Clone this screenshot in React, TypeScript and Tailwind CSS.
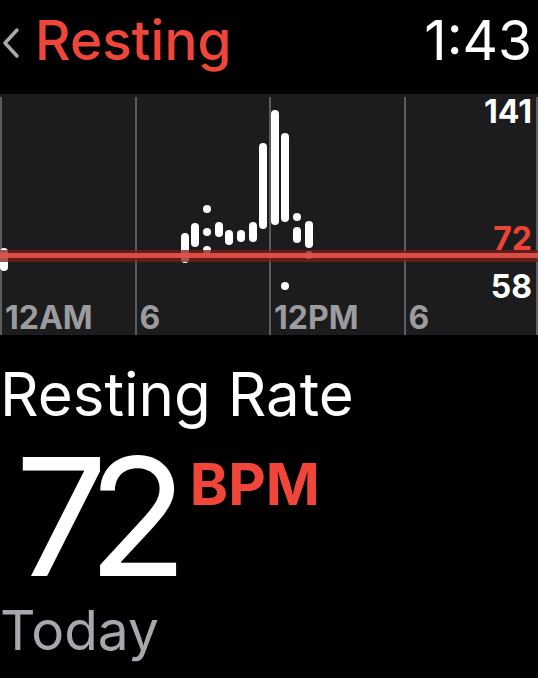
import React from "react";

const bars: { x: number; y1: number; y2: number }[] = [
  { x: 4, y1: 154, y2: 177 },
  { x: 185, y1: 139, y2: 169 },
  { x: 195, y1: 129, y2: 153 },
  { x: 219, y1: 128, y2: 143 },
  { x: 229, y1: 136, y2: 151 },
  { x: 241, y1: 136, y2: 148 },
  { x: 253, y1: 128, y2: 148 },
  { x: 263, y1: 49, y2: 135 },
  { x: 275, y1: 16, y2: 131 },
  { x: 285, y1: 39, y2: 128 },
  { x: 297, y1: 133, y2: 149 },
  { x: 309, y1: 127, y2: 154 },
];

const dots: { x: number; y: number }[] = [
  { x: 207, y: 115 },
  { x: 207, y: 138 },
  { x: 207, y: 156 },
  { x: 297, y: 123 },
  { x: 309, y: 161 },
  { x: 285, y: 192 },
];

const gridX = [1, 136, 270, 405, 537];
const hours = ["12AM", "6", "12PM", "6"];

function Chart() {
  return (
    <div className="relative flex h-[241px] flex-col justify-end bg-[#1c1c1e] pb-[1px]">
      <svg className="absolute inset-0" width="538" height="241" viewBox="0 0 538 241">
        {gridX.map((x) => (
          <rect key={x} x={x - 1} y={3} width={2} height={238} fill="#5c5c5e" />
        ))}
        {bars.map((b, i) => (
          <rect key={i} x={b.x - 4} y={b.y1} width={8} height={b.y2 - b.y1} rx={4} fill="#fff" />
        ))}
        {dots.map((d, i) => (
          <circle key={i} cx={d.x} cy={d.y} r={4} fill="#fff" />
        ))}
        <rect x={0} y={156} width={538} height={12} fill="#7a1d17" opacity={0.75} />
        <rect x={0} y={159} width={538} height={5} fill="#e8534a" opacity={0.9} />
      </svg>

      {/* scale values on the right edge of the plot */}
      <span className="absolute right-[6px] top-[2px] text-[32px] font-bold leading-none text-white">141</span>
      <span className="absolute right-[6px] top-[129px] text-[32px] font-bold leading-none text-[#ee4335]">72</span>
      <span className="absolute right-[6px] top-[177px] text-[32px] font-bold leading-none text-white">58</span>

      <div className="relative flex text-[32px] font-bold leading-none text-[#9c9c9e]">
        {hours.map((h, i) => (
          <span key={i} className="w-[134.5px] pl-[5px]">
            {h}
          </span>
        ))}
      </div>
    </div>
  );
}

export default function App() {
  return (
    <div
      className="w-[538px] h-[678px] overflow-hidden bg-black text-white"
      style={{ fontFamily: "Inter, 'Noto Sans', sans-serif" }}
    >
      <header className="flex h-[94px] items-start justify-between pt-[8px]">
        <div className="flex items-center">
          <svg width="20" height="32" viewBox="0 0 20 32" className="ml-[1px] mt-[6px]">
            <path d="M16 3 L4 16 L16 29" stroke="#a9a9ae" strokeWidth="3.5" fill="none" strokeLinecap="round" strokeLinejoin="round" />
          </svg>
          <span className="ml-[14px] text-[55px] font-medium leading-[64px] text-[#f0463a]">Resting</span>
        </div>
        <span className="mr-[6px] text-[55px] font-normal leading-[64px]">1:43</span>
      </header>

      <Chart />

      <section className="flex flex-col items-start pt-[29px]">
        <div className="text-[60px] font-normal leading-none">Resting Rate</div>
        <div className="mt-[27px] flex items-start">
          <span className="ml-[15px] text-[164px] font-normal leading-[132px] tracking-[-20px]">72</span>
          <span className="ml-[22px] mt-[4px] text-[58px] font-bold leading-none text-[#f0463a]">BPM</span>
        </div>
        <div className="mt-[20px] text-[55px] font-normal leading-none text-[#a7a7b0]">Today</div>
      </section>
    </div>
  );
}
